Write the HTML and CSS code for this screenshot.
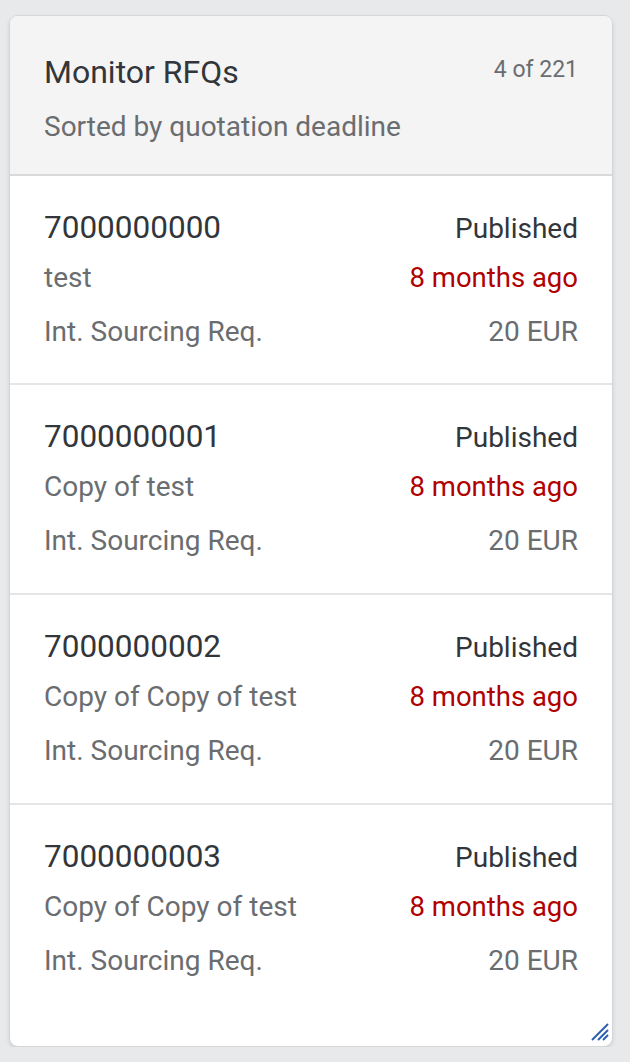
FILE: index.html
```html
<!DOCTYPE html>
<html lang="en">
<head>
<meta charset="utf-8">
<title>Monitor RFQs</title>
<link rel="stylesheet" href="styles.css">
</head>
<body>
<div class="card">
  <div class="card-header">
    <div class="header-top">
      <div class="title">Monitor RFQs</div>
      <div class="counter">4 of 221</div>
    </div>
    <div class="subtitle">Sorted by quotation deadline</div>
  </div>
  <div class="list">
    <div class="item">
      <div class="line line-1"><span class="number">7000000000</span><span class="status">Published</span></div>
      <div class="line line-2"><span class="desc">test</span><span class="deadline">8 months ago</span></div>
      <div class="line line-3"><span class="desc">Int. Sourcing Req.</span><span class="amount">20 EUR</span></div>
    </div>
    <div class="item">
      <div class="line line-1"><span class="number">7000000001</span><span class="status">Published</span></div>
      <div class="line line-2"><span class="desc">Copy of test</span><span class="deadline">8 months ago</span></div>
      <div class="line line-3"><span class="desc">Int. Sourcing Req.</span><span class="amount">20 EUR</span></div>
    </div>
    <div class="item">
      <div class="line line-1"><span class="number">7000000002</span><span class="status">Published</span></div>
      <div class="line line-2"><span class="desc">Copy of Copy of test</span><span class="deadline">8 months ago</span></div>
      <div class="line line-3"><span class="desc">Int. Sourcing Req.</span><span class="amount">20 EUR</span></div>
    </div>
    <div class="item item-last">
      <div class="line line-1"><span class="number">7000000003</span><span class="status">Published</span></div>
      <div class="line line-2"><span class="desc">Copy of Copy of test</span><span class="deadline">8 months ago</span></div>
      <div class="line line-3"><span class="desc">Int. Sourcing Req.</span><span class="amount">20 EUR</span></div>
    </div>
  </div>
  <svg class="resize" width="18" height="18" viewBox="0 0 18 18" aria-hidden="true">
    <line x1="1" y1="17" x2="17" y2="1" stroke="#2b5fae" stroke-width="2"/>
    <line x1="7" y1="17" x2="17" y2="7" stroke="#2b5fae" stroke-width="2"/>
    <line x1="12" y1="17" x2="17" y2="12" stroke="#2b5fae" stroke-width="2"/>
  </svg>
</div>
</body>
</html>
```

FILE: styles.css
```css
html, body {
  margin: 0;
  padding: 0;
}

body {
  background: #e8e9ea;
  font-family: Roboto, "Liberation Sans", Arial, sans-serif;
  color: #32363a;
}

.card {
  position: relative;
  box-sizing: border-box;
  margin: 15px 0 0 9px;
  width: 604px;
  height: 1032px;
  background: #ffffff;
  border: 1px solid #d5d6d7;
  border-radius: 9px;
  box-shadow: 0 2px 4px rgba(0, 0, 0, 0.10);
  overflow: hidden;
}

.card-header {
  background: #f4f4f4;
  border-bottom: 2px solid #d9d9d9;
  height: 158px;
  box-sizing: content-box;
  padding: 0 34px 0 34px;
}

.header-top {
  display: flex;
  justify-content: space-between;
  align-items: flex-start;
  padding-top: 38px;
}

.title {
  font-size: 32px;
  line-height: 36px;
  color: #32363a;
}

.counter {
  font-size: 23px;
  line-height: 28px;
  padding-top: 2px;
  color: #6a6d70;
}

.subtitle {
  margin-top: 19px;
  font-size: 28px;
  line-height: 36px;
  color: #6a6d70;
}

.item {
  height: 209px;
  border-bottom: 2px solid #e5e5e5;
  box-sizing: border-box;
  padding: 32px 34px 0 34px;
}

.item + .item {
  height: 210px;
}

.item-last {
  border-bottom: none;
}

.line {
  display: flex;
  justify-content: space-between;
  align-items: baseline;
}

.line-1 {
  line-height: 40px;
}

.line-2 {
  margin-top: 11px;
  line-height: 36px;
}

.line-3 {
  margin-top: 18px;
  line-height: 36px;
}

.number {
  font-size: 31.5px;
  color: #32363a;
}

.status {
  font-size: 28px;
  color: #32363a;
}

.desc {
  font-size: 28px;
  color: #6a6d70;
}

.deadline {
  font-size: 27.5px;
  color: #b00000;
}

.amount {
  font-size: 28px;
  color: #6a6d70;
}

.resize {
  position: absolute;
  right: 3px;
  bottom: 5px;
}
```
